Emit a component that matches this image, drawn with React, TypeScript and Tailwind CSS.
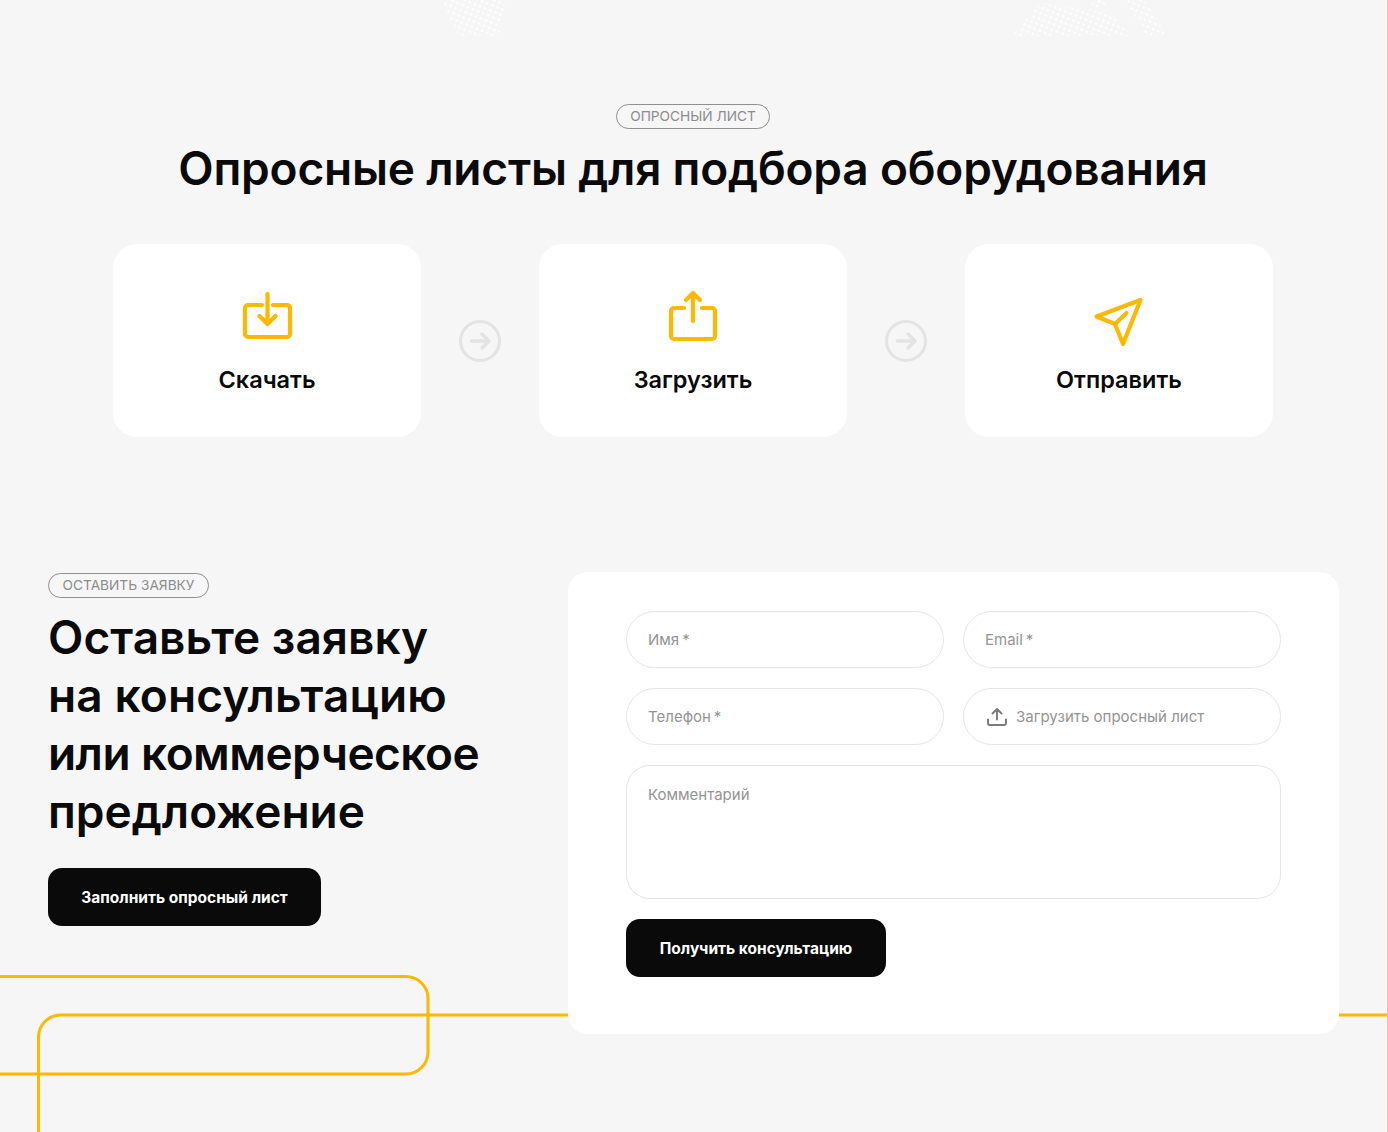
import React from "react";

const Y = "#FFB800";

function Dots() {
  return (
    <svg className="absolute left-0 top-0" width="1388" height="37" aria-hidden="true">
      <defs>
        <pattern id="dots" width="5.5" height="5.5" patternUnits="userSpaceOnUse" patternTransform="rotate(22)">
          <circle cx="2" cy="2" r="1.3" fill="#ffffff" />
        </pattern>
      </defs>
      <polygon points="440,0 505,0 499,36 459,36" fill="url(#dots)" />
      <polygon points="1012,36 1040,3 1055,5 1072,7 1092,10 1112,14 1132,36" fill="url(#dots)" />
      <polygon points="1125,0 1145,0 1167,36 1147,36" fill="url(#dots)" />
      <polygon points="1087,0 1110,0 1107,7 1095,7" fill="url(#dots)" />
    </svg>
  );
}

function Lines() {
  return (
    <svg className="absolute left-0 top-0" width="1387" height="1132" fill="none" stroke={Y} strokeWidth="3" aria-hidden="true">
      <path d="M0 976.5H406a22 22 0 0 1 22 22V1052a22 22 0 0 1 -22 22H0" />
      <path d="M38.5 1132V1037a22 22 0 0 1 22 -22H1388" />
    </svg>
  );
}

function Badge({ children }: { children: React.ReactNode }) {
  return (
    <div className="inline-flex h-[25px] items-center rounded-full border border-[#8f8f8f] px-[13.500px] text-[13.700px] leading-none text-[#8c8c8c]">
      {children}
    </div>
  );
}

function Arrow() {
  return (
    <svg width="42" height="42" viewBox="0 0 42 42" fill="none" stroke="#E3E3E3" strokeWidth="3" strokeLinecap="round" strokeLinejoin="round" className="shrink-0">
      <circle cx="21" cy="21" r="19.5" />
      <path d="M12.500 21H29.500M23 14L30 21L23 28" strokeWidth="3.500" />
    </svg>
  );
}

function Card({ icon, label }: { icon: React.ReactNode; label: string }) {
  return (
    <div className="flex h-[193px] w-[308px] flex-col items-center rounded-[24px] bg-white pt-[46px]">
      <div className="h-[58px]">{icon}</div>
      <div className="mt-[17px] text-[23.500px] font-semibold leading-[30px] text-[#0a0a0a]">{label}</div>
    </div>
  );
}

const stroke = { fill: "none", stroke: Y, strokeWidth: 4.2, strokeLinecap: "round" as const, strokeLinejoin: "round" as const };

const DownloadIcon = (
  <svg width="52" height="58" viewBox="0 0 52 58" {...stroke}>
    <path d="M21 15H7a3 3 0 0 0 -3 3V44a3 3 0 0 0 3 3H46a3 3 0 0 0 3 -3V18a3 3 0 0 0 -3 -3H32" />
    <path d="M26.500 4V33.500M18.500 26L26.500 34L34.500 26" />
  </svg>
);
const UploadIcon = (
  <svg width="52" height="58" viewBox="0 0 52 58" {...stroke}>
    <path d="M17 18H7a3 3 0 0 0 -3 3V46a3 3 0 0 0 3 3H45a3 3 0 0 0 3 -3V21a3 3 0 0 0 -3 -3H35" />
    <path d="M26 31V3M19 10L26 3L33 10" />
  </svg>
);
const SendIcon = (
  <svg width="52" height="58" viewBox="0 0 52 58" {...stroke}>
    <path d="M47.500 10L3.500 26.500L22 34L30 54Z" />
    <path d="M22 34L33.500 23" />
  </svg>
);

const field = "flex h-[57px] items-center rounded-full border border-[#e6e6e6] bg-white pl-[21px] pt-[2px] text-[15px] text-[#949494]";

function Star() {
  return <span className="ml-[3px]">*</span>;
}

function Button({ label, width }: { label: string; width: string }) {
  return (
    <div className={`flex h-[57.500px] items-center justify-center rounded-[14px] bg-[#0a0a0a] pt-[2px] text-[15.500px] font-bold text-white ${width}`}>
      {label}
    </div>
  );
}

export default function App() {
  return (
    <div
      className="relative h-[1132px] overflow-hidden border-r border-[#e9bfa6] bg-[#f6f6f6] pt-[104px] pr-px"
      style={{ fontFamily: "Inter, 'Noto Sans', sans-serif" }}
    >
      <Dots />
      <Lines />
      <div className="relative flex flex-col items-center">
        <Badge>ОПРОСНЫЙ ЛИСТ</Badge>
        <h2 className="mt-[10px] text-[46px] font-semibold leading-[58px] tracking-[-0.2px] text-[#0a0a0a]">
          Опросные листы для подбора оборудования
        </h2>
        <div className="mt-[47px] flex items-center gap-[38px]">
          <Card icon={DownloadIcon} label="Скачать" />
          <Arrow />
          <Card icon={UploadIcon} label="Загрузить" />
          <Arrow />
          <Card icon={SendIcon} label="Отправить" />
        </div>
      </div>
      <div className="relative mt-[135px] flex items-start pl-[48px]">
        <div className="w-[520px] shrink-0">
          <Badge>ОСТАВИТЬ ЗАЯВКУ</Badge>
          <h2 className="mt-[10px] text-[46px] font-semibold leading-[58px] text-[#0a0a0a]">
            <span className="tracking-[0.05px]">Оставьте заявку</span>
            <br />
            <span className="tracking-[0.12px]">на консультацию</span>
            <br />
            <span className="tracking-[-0.55px]">или коммерческое</span>
            <br />
            <span>предложение</span>
          </h2>
          <div className="mt-[28px]">
            <Button label="Заполнить опросный лист" width="w-[273px]" />
          </div>
        </div>
        <div className="w-[771px] rounded-[20px] bg-white px-[58px] pt-[39px] pb-[57px]">
          <div className="grid grid-cols-[318px_318px] gap-x-[19px] gap-y-[20px]">
            <div className={field}>
              Имя
              <Star />
            </div>
            <div className={field}>
              Email
              <Star />
            </div>
            <div className={field}>
              Телефон
              <Star />
            </div>
            <div className={field}>
              <svg width="20" height="20" viewBox="0 0 20 20" fill="none" stroke="#7d7d7d" strokeWidth="2" strokeLinecap="round" strokeLinejoin="round" className="mr-[9px] ml-[2px] -mt-[2px]">
                <path d="M10 12.500V2M5.500 6.500L10 2L14.500 6.500M1 12.500V16a2 2 0 0 0 2 2H17a2 2 0 0 0 2 -2V12.500" />
              </svg>
              Загрузить опросный лист
            </div>
            <div className="col-span-2 h-[134px] rounded-[24px] border border-[#e6e6e6] bg-white pl-[21px] pt-[19px] text-[15px] leading-[20px] text-[#949494]">
              Комментарий
            </div>
          </div>
          <div className="mt-[20px]">
            <Button label="Получить консультацию" width="w-[260px]" />
          </div>
        </div>
      </div>
    </div>
  );
}
